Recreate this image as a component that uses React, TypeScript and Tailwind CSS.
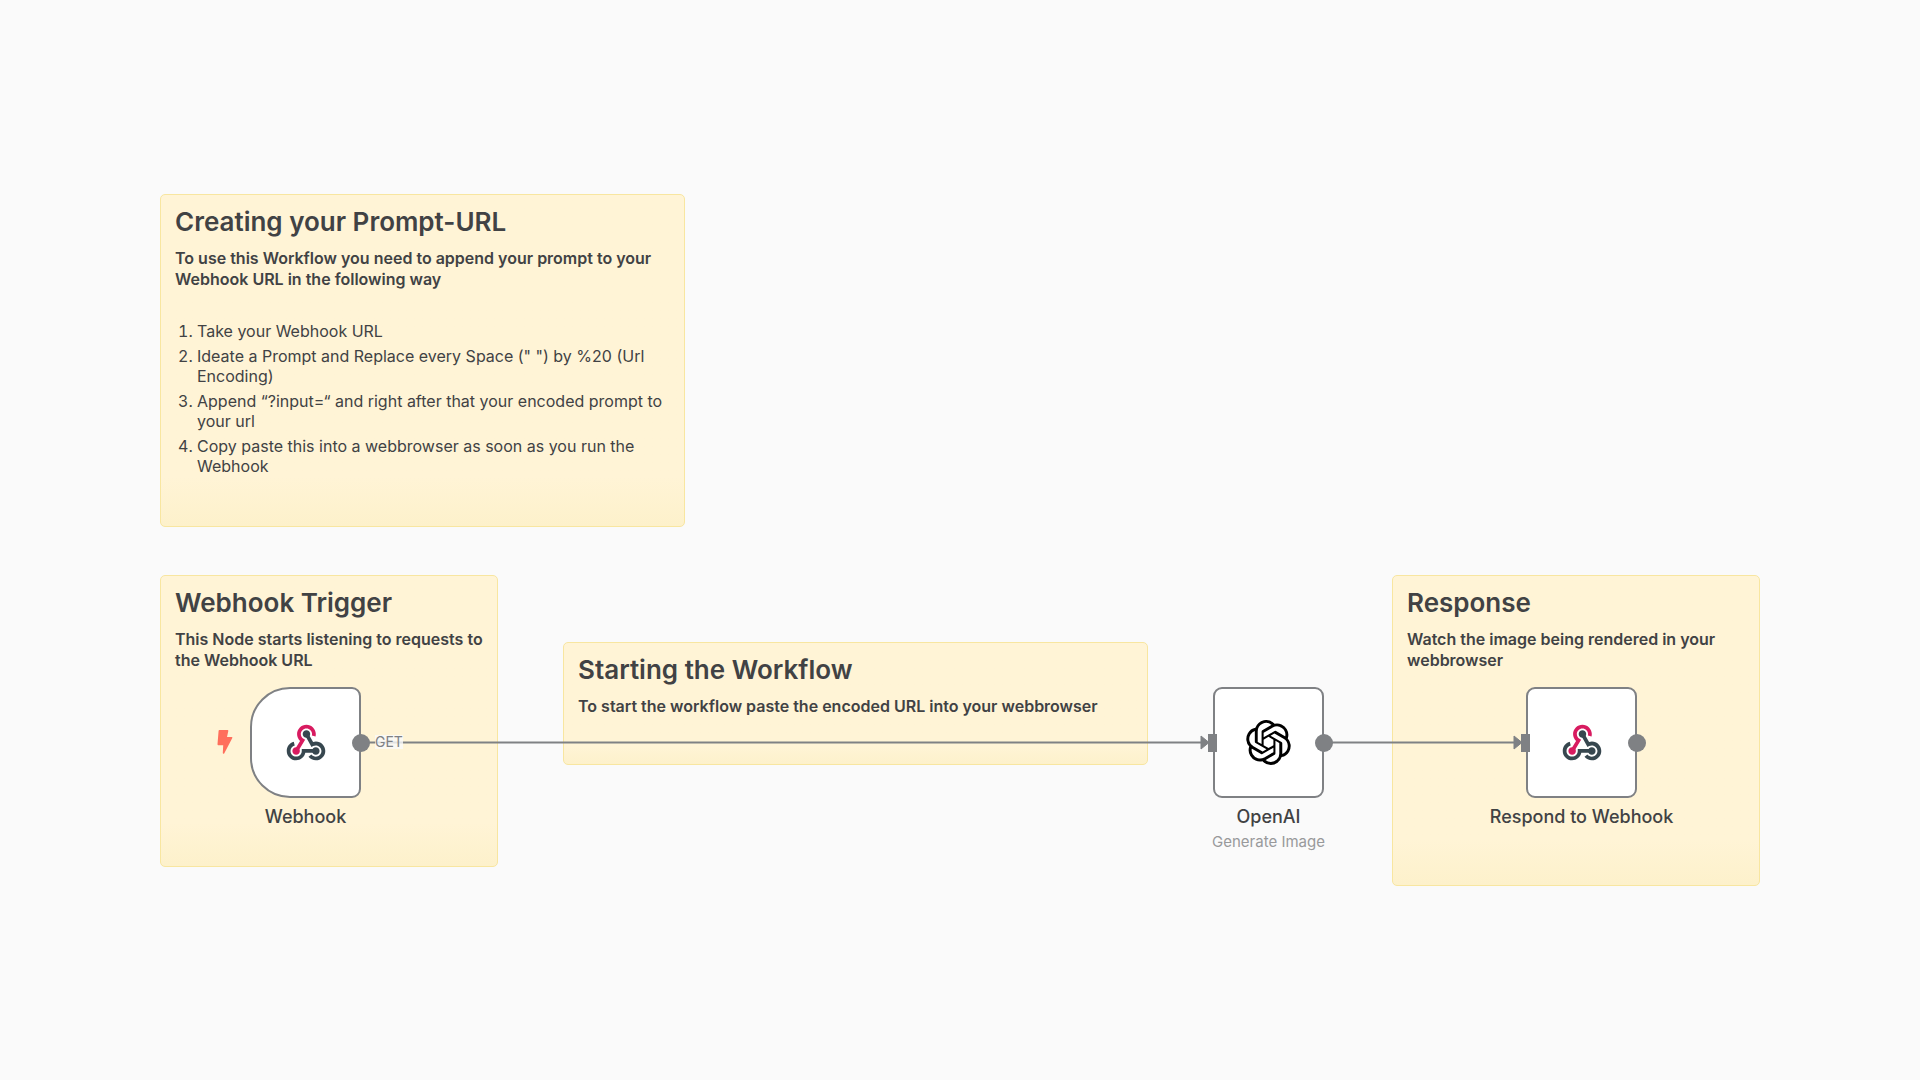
import type { ReactNode } from "react";
import { SiOpenai } from "react-icons/si";

function Sticky({ className, title, lead, children }: { className: string; title: string; lead: string; children?: ReactNode }) {
    return (
        <section
            className={`absolute rounded-[5px] border border-[#f8e6a0] bg-linear-to-b from-[#fff4d6] from-85% to-[#fdf1cb] pt-[9px] pr-2 pl-[14px] text-[#414244] ${className}`}
        >
            <h2 className="text-[26px] leading-9 font-semibold">{title}</h2>
            <p className="mt-2 text-[16px] leading-[21px] font-semibold">{lead}</p>
            {children}
        </section>
    );
}

function WebhookIcon() {
    return (
        <svg viewBox="0 0 48 48" className="size-[45px]" aria-hidden="true">
            <path fill="#37474f" d="M35 37c-2.2 0-4-1.8-4-4s1.8-4 4-4 4 1.8 4 4-1.8 4-4 4" />
            <path
                fill="#37474f"
                d="M35 43c-3 0-5.9-1.4-7.8-3.7l3.1-2.5c1.1 1.4 2.9 2.3 4.7 2.3 3.3 0 6-2.7 6-6s-2.7-6-6-6c-1 0-2 .3-2.9.7l-1.7 1L23.3 16l3.5-1.9 5.3 9.4c1-.3 2-.5 3-.5 5.5 0 10 4.5 10 10S40.5 43 35 43"
            />
            <path
                fill="#37474f"
                d="M14 43C8.5 43 4 38.5 4 33c0-4.6 3.1-8.5 7.5-9.7l1 3.9C9.9 27.9 8 30.3 8 33c0 3.3 2.7 6 6 6s6-2.7 6-6v-2h15v4H23.8c-.9 4.6-5 8-9.8 8"
            />
            <path fill="#d81b60" d="M14 37c-2.2 0-4-1.8-4-4s1.8-4 4-4 4 1.8 4 4-1.8 4-4 4" />
            <path fill="#37474f" d="M25 19c-2.2 0-4-1.8-4-4s1.8-4 4-4 4 1.8 4 4-1.8 4-4 4" />
            <path
                fill="#d81b60"
                d="m15.7 34-3.4-2 5.9-9.7c-2-1.9-3.2-4.5-3.2-7.3 0-5.5 4.5-10 10-10s10 4.5 10 10c0 .9-.1 1.7-.3 2.5l-3.9-1c.1-.5.2-1 .2-1.5 0-3.3-2.7-6-6-6s-6 2.7-6 6c0 2.1 1.1 4 2.9 5.1l1.7 1z"
            />
        </svg>
    );
}

type NodeProps = {
    className: string;
    name: string;
    subtitle?: string;
    trigger?: boolean;
    children: ReactNode;
};

function WorkflowNode({ className, name, subtitle, trigger, children }: NodeProps) {
    return (
        <div className={`absolute flex w-[111px] flex-col items-center ${className}`}>
            <div
                className={`relative flex size-[111px] items-center justify-center border-2 border-[#7f8184] bg-white ${
                    trigger ? "rounded-l-[40px] rounded-r-[9px]" : "rounded-[9px]"
                }`}
            >
                {children}

                {/* Input handle */}
                {!trigger && <span className="absolute top-[45px] -left-[7px] h-[18px] w-[9px] bg-[#7f8184]" />}

                {/* Output handle */}
                <span className="absolute top-[45px] -right-[11px] size-[18px] rounded-full bg-[#7f8184]" />

                {/* Trigger bolt */}
                {trigger && (
                    <svg viewBox="0 0 16 24" className="absolute top-[41px] -left-[35px] h-6 w-4" aria-hidden="true">
                        <path
                            fill="#ff6f5c"
                            d="M2.4 0h8.2c.5 0 .8.4.7.9L10 7h4.6c.7 0 1 .6.7 1.1L7.2 23.4c-.4.8-1.5.5-1.4-.4l.4-7.8H1.3c-.5 0-.8-.4-.8-.9L1.6.7c.1-.4.4-.7.8-.7z"
                        />
                    </svg>
                )}
            </div>
            <p className="mt-[7px] text-[18px] leading-6 font-medium whitespace-nowrap text-[#414244]">{name}</p>
            {subtitle && <p className="mt-px text-[15px] leading-6 whitespace-nowrap text-[#98999b]">{subtitle}</p>}
        </div>
    );
}

export default function App() {
    return (
        <main className="relative min-h-screen overflow-hidden bg-[#fafafa] font-['Inter',sans-serif]">
            {/* Sticky notes */}
            <Sticky
                className="top-[194px] left-40 h-[333px] w-[525px]"
                title="Creating your Prompt-URL"
                lead="To use this Workflow you need to append your prompt to your Webhook URL in the following way"
            >
                <ol className="mt-[31px] list-decimal space-y-[5px] pl-[22px] text-[16px] leading-5">
                    <li>Take your Webhook URL</li>
                    <li>Ideate a Prompt and Replace every Space (" ") by %20 (Url Encoding)</li>
                    <li>Append “?input=“ and right after that your encoded prompt to your url</li>
                    <li>Copy paste this into a webbrowser as soon as you run the Webhook</li>
                </ol>
            </Sticky>
            <Sticky
                className="top-[575px] left-40 h-[292px] w-[338px]"
                title="Webhook Trigger"
                lead="This Node starts listening to requests to the Webhook URL"
            />
            <Sticky
                className="top-[642px] left-[563px] h-[123px] w-[585px]"
                title="Starting the Workflow"
                lead="To start the workflow paste the encoded URL into your webbrowser"
            />
            <Sticky
                className="top-[575px] left-[1392px] h-[311px] w-[368px]"
                title="Response"
                lead="Watch the image being rendered in your webbrowser"
            />

            {/* Connections */}
            <svg className="absolute inset-0 size-full" aria-hidden="true">
                <g stroke="#7f8184" strokeWidth="2">
                    <path d="M361 742.5H1202" />
                    <path d="M1325 742.5H1515" />
                </g>
                <g fill="#7f8184" stroke="#7f8184" strokeLinejoin="round">
                    <path d="M1201 736v13l8-6.5z" />
                    <path d="M1514 736v13l8-6.5z" />
                </g>
            </svg>
            <span className="absolute top-[735px] left-[375px] bg-[#fafafa]/80 text-[14px] leading-[14px] text-[#7f8184]">GET</span>

            {/* Nodes */}
            <WorkflowNode className="top-[687px] left-[250px]" name="Webhook" trigger>
                <WebhookIcon />
            </WorkflowNode>
            <WorkflowNode className="top-[687px] left-[1213px]" name="OpenAI" subtitle="Generate Image">
                <SiOpenai className="size-[45px] text-black" />
            </WorkflowNode>
            <WorkflowNode className="top-[687px] left-[1526px]" name="Respond to Webhook">
                <WebhookIcon />
            </WorkflowNode>
        </main>
    );
}
